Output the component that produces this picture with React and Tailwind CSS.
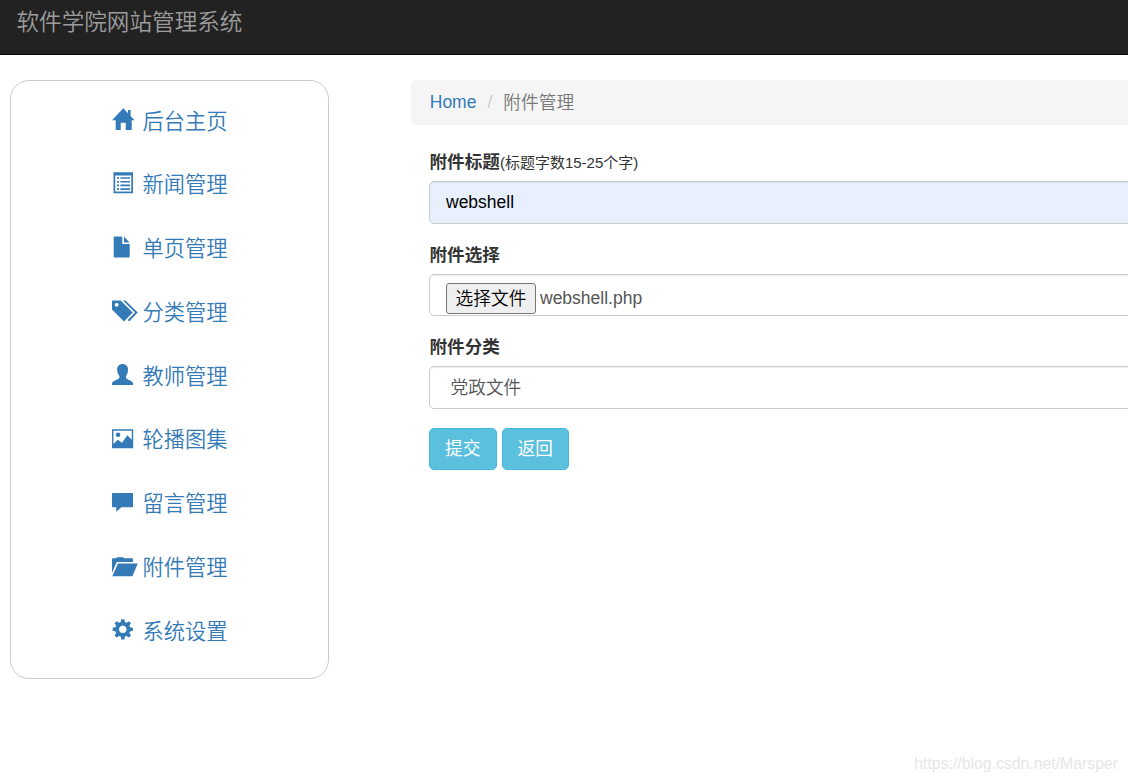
import React from 'react'

const icons = {
  home: (
    <path d="M11.3 .3 L16 5.2 V2 H18.6 V8 L22.6 12.2 H19.7 V22 H13.7 V14.7 H8.7 V22 H3.7 V12.2 H0 Z" />
  ),
  list: (
    <>
      <path fillRule="evenodd" d="M1.5 0.2 H21 V21.2 H1.5 Z M3.2 3.6 V19.4 H19.3 V3.6 Z" />
      <path d="M5 5.2h2v1.6h-2z M5 8.9h2v1.6h-2z M5 12.6h2v1.6h-2z M5 16.3h2v1.6h-2z M8.4 5.2h9.6v1.6h-9.6z M8.4 8.9h9.6v1.6h-9.6z M8.4 12.6h9.6v1.6h-9.6z M8.4 16.3h9.6v1.6h-9.6z" />
    </>
  ),
  file: (
    <path d="M2.6 .5 H10.3 V7.9 H17.7 V20.6 Q17.7 21.5 16.8 21.5 H2.6 Q1.7 21.5 1.7 20.6 V1.4 Q1.7 .5 2.6 .5 Z M12 .6 L17.5 6.5 H12 Z" />
  ),
  tags: (
    <>
      <path fillRule="evenodd" d="M0 1.3 Q0 .5 .8 .5 H8.6 L20.7 12.5 L12 21.5 L0 9.4 Z M4.7 2.9 a1.9 1.9 0 1 0 .01 0 Z" />
      <path d="M11 .5 H13.4 L25.7 12.5 L17.2 21.4 L15.8 19.9 L23 12.5 Z" />
    </>
  ),
  user: (
    <path d="M10.6 1 C14 1 16 3.3 16 6.5 C16 9.3 15.4 11.2 14 13 V14.7 C14.5 16.6 21 17.7 21 20.3 V22 H0 V20.3 C0 17.7 6.9 16.6 7.4 14.7 V13 C5.8 11.2 5.2 9.3 5.2 6.5 C5.2 3.3 7.2 1 10.6 1 Z" />
  ),
  picture: (
    <>
      <path fillRule="evenodd" d="M0 2.3 H21.2 V21.3 H0 Z M1.4 3.8 V17 L5.8 12.8 L10 15.8 L15.3 8.3 L19.8 12.8 V3.8 Z" />
      <circle cx="6.1" cy="7.7" r="2.3" />
    </>
  ),
  comment: (
    <path d="M.8 2 H20.2 Q21 2 21 2.8 V15.4 Q21 16.2 20.2 16.2 H9.3 L4.2 20.8 V16.2 H.8 Q0 16.2 0 15.4 V2.8 Q0 2 .8 2 Z" />
  ),
  folder: (
    <>
      <path d="M4.2 3.3 Q4.4 2.3 5.4 2.3 H10.7 Q11.7 2.3 12 3.3 H20 Q21 3.3 21 4.3 V7 H4.8 L0 17.8 V4.3 Q0 3.3 1 3.3 Z" />
      <path d="M6 8.6 H25.8 L20.6 20.7 Q20.3 21.3 19.6 21.3 H.3 Z" />
    </>
  ),
  cog: (
    <path
      fillRule="evenodd"
      d="M9.3 1.3 H12.3 L12.9 4.1 L14.5 4.8 L16.9 3.2 L19 5.3 L17.4 7.7 L18.1 9.3 L20.9 9.8 V12.8 L18.1 13.4 L17.4 15 L19 17.4 L16.9 19.5 L14.5 17.9 L12.9 18.6 L12.3 21.4 H9.3 L8.7 18.6 L7.1 17.9 L4.7 19.5 L2.6 17.4 L4.2 15 L3.5 13.4 L.7 12.8 V9.8 L3.5 9.3 L4.2 7.7 L2.6 5.3 L4.7 3.2 L7.1 4.8 L8.7 4.1 Z M10.8 7.5 a3.8 3.8 0 1 0 .01 0 Z"
    />
  ),
}

const menu = [
  { icon: 'home', text: '后台主页' },
  { icon: 'list', text: '新闻管理' },
  { icon: 'file', text: '单页管理' },
  { icon: 'tags', text: '分类管理' },
  { icon: 'user', text: '教师管理' },
  { icon: 'picture', text: '轮播图集' },
  { icon: 'comment', text: '留言管理' },
  { icon: 'folder', text: '附件管理' },
  { icon: 'cog', text: '系统设置' },
]

function Sidebar() {
  return (
    <nav className="h-[599px] w-[319px] shrink-0 rounded-[19px] border border-[#ccc] pt-[8.3px] pl-[101px]">
      {menu.map((item) => (
        <a
          key={item.text}
          href="#"
          className="flex h-[63.75px] items-center text-[21.25px] leading-[30px] font-[350] text-[#337ab7]"
        >
          <svg viewBox="0 0 26 24" className="mr-[4.5px] mb-[1.5px] h-6 w-[26px] shrink-0 fill-current">
            {icons[item.icon]}
          </svg>
          <span className="pt-[0.8px]">{item.text}</span>
        </a>
      ))}
    </nav>
  )
}

function Field({ label, hint, children }) {
  return (
    <div className="mb-[18.75px]">
      <div className="mb-[6.25px] flex h-[25px] items-center pl-[0.5px] leading-[25px] text-[#333]">
        <label className="text-[17.6px] font-bold">{label}</label>
        {hint && <span className="text-[15px]">{hint}</span>}
      </div>
      {children}
    </div>
  )
}

function AttachmentForm() {
  const control =
    'flex h-[42.5px] w-full items-center rounded-[5px] border border-[#ccc] px-[16px] shadow-[inset_0_1px_1px_rgba(0,0,0,0.075)]'
  return (
    <form className="pl-[18px]">
      <Field label="附件标题" hint="(标题字数15-25个字)">
        <input
          type="text"
          defaultValue="webshell"
          className={`${control} bg-[#e8f0fe] text-black outline-none`}
        />
      </Field>
      <Field label="附件选择">
        <div className={`${control} bg-white pt-[7px] text-[#555]`}>
          <button
            type="button"
            className="h-[31px] w-[90px] shrink-0 rounded-[3px] border border-[#767676] bg-[#efefef] pt-px text-[17.7px] leading-[29px] font-[350] text-black"
          >
            选择文件
          </button>
          <span className="ml-1">webshell.php</span>
        </div>
      </Field>
      <Field label="附件分类">
        <div className={`${control} bg-white pt-[2px] pl-[20.5px] text-[17.7px] font-[350] text-[#555]`}>党政文件</div>
      </Field>
      <div className="flex gap-[5px]">
        <button
          type="submit"
          className="h-[42.5px] w-[67.5px] rounded-[5px] border border-[#46b8da] bg-[#5bc0de] pt-px text-[17.7px] text-white"
        >
          提交
        </button>
        <button
          type="button"
          className="h-[42.5px] w-[67.5px] rounded-[5px] border border-[#46b8da] bg-[#5bc0de] pt-px text-[17.7px] text-white"
        >
          返回
        </button>
      </div>
    </form>
  )
}

function App() {
  return (
    <div className="relative h-[782px] w-[1128px] overflow-hidden bg-white font-['Liberation_Sans','Noto_Sans_CJK_SC',sans-serif] text-[17.5px] leading-[25px] text-[#333]">
      <header className="h-[55px] border-b border-[#080808] bg-[#222] pt-[10px] pl-[16.5px]">
        <h1 className="text-[22.6px] leading-[25px] font-[350] text-[#9d9d9d]">
          软件学院网站管理系统
        </h1>
      </header>
      <div className="flex pt-[25px] pl-[10px]">
        <Sidebar />
        <main className="ml-[82px] w-[900px] shrink-0">
          <ol className="mb-[25px] flex h-[45px] items-center rounded-[5px] bg-[#f5f5f5] pl-[18.75px]">
            <li>
              <a href="#" className="text-[#337ab7]">Home</a>
            </li>
            <li className="px-[11px] text-[#ccc]">/</li>
            <li className="pt-px text-[17.7px] font-[350] text-[#777]">附件管理</li>
          </ol>
          <AttachmentForm />
        </main>
      </div>
      <div className="absolute right-[10px] bottom-[6px] text-[15.8px] text-[#e6e6e6]">
        https://blog.csdn.net/Marsper
      </div>
    </div>
  )
}

export default App
